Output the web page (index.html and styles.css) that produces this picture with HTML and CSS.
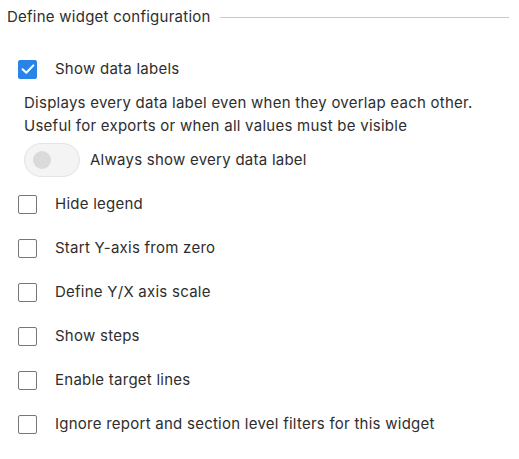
FILE: index.html
```html
<!DOCTYPE html>
<html lang="en">
<head>
<meta charset="utf-8">
<title>Define widget configuration</title>
<link rel="stylesheet" href="styles.css">
</head>
<body>
<section class="panel">
  <header class="header">
    <h2 class="title">Define widget configuration</h2>
    <span class="rule"></span>
  </header>

  <label class="row">
    <span class="box checked">
      <svg viewBox="0 0 20 20" width="20" height="20"><path d="M4.6 10.2 L8.3 13.8 L15.4 6.4" fill="none" stroke="#fff" stroke-width="2" stroke-linecap="round" stroke-linejoin="round"/></svg>
    </span>
    <span class="label">Show data labels</span>
  </label>

  <p class="desc">Displays every data label even when they overlap each other.<br>Useful for exports or when all values must be visible</p>

  <div class="toggle-row">
    <span class="toggle"><span class="knob"></span></span>
    <span class="label">Always show every data label</span>
  </div>

  <div class="list">
    <label class="row"><span class="box"></span><span class="label">Hide legend</span></label>
    <label class="row"><span class="box"></span><span class="label">Start Y-axis from zero</span></label>
    <label class="row"><span class="box"></span><span class="label">Define Y/X axis scale</span></label>
    <label class="row"><span class="box"></span><span class="label">Show steps</span></label>
    <label class="row"><span class="box"></span><span class="label">Enable target lines</span></label>
    <label class="row"><span class="box"></span><span class="label">Ignore report and section level filters for this widget</span></label>
  </div>
</section>
</body>
</html>
```

FILE: styles.css
```css
html, body {
  margin: 0;
  padding: 0;
  background: #ffffff;
}

body {
  font-family: Inter, "Liberation Sans", Arial, sans-serif;
  font-size: 15px;
  letter-spacing: 0.25px;
  color: #2e2e2e;
}

.panel {
  width: 509px;
  display: flex;
  flex-direction: column;
}

.header {
  display: flex;
  align-items: center;
  gap: 9px;
  height: 34px;
  padding-left: 7px;
}

.title {
  margin: 0;
  font-size: 15px;
  font-weight: 400;
  line-height: 20px;
  color: #2e2e2e;
  white-space: nowrap;
}

.rule {
  flex: 1;
  height: 1px;
  background: #c9c9c9;
}

.row {
  display: flex;
  align-items: center;
  gap: 18px;
  height: 44px;
  padding-left: 18px;
}

.header + .row {
  margin-top: 13px;
}

.box {
  box-sizing: border-box;
  width: 19px;
  height: 19px;
  border: 1.5px solid #777777;
  border-radius: 2px;
  flex: none;
  display: flex;
  align-items: center;
  justify-content: center;
}

.box.checked {
  background: #2a83e6;
  border-color: #2a83e6;
}

.box svg {
  flex: none;
}

.label {
  line-height: 20px;
  white-space: nowrap;
}

.desc {
  margin: 0;
  padding-left: 24px;
  line-height: 23px;
  color: #2e2e2e;
}

.toggle-row {
  display: flex;
  align-items: center;
  gap: 10px;
  margin-top: 6px;
  padding-left: 24px;
}

.toggle {
  position: relative;
  box-sizing: border-box;
  width: 56px;
  height: 34px;
  border-radius: 17px;
  background: #f4f4f4;
  border: 1px solid #e4e4e4;
  flex: none;
}

.knob {
  position: absolute;
  left: 8px;
  top: 7px;
  width: 18px;
  height: 18px;
  border-radius: 50%;
  background: #dadada;
}

.list {
  display: flex;
  flex-direction: column;
  margin-top: 5px;
}
```
